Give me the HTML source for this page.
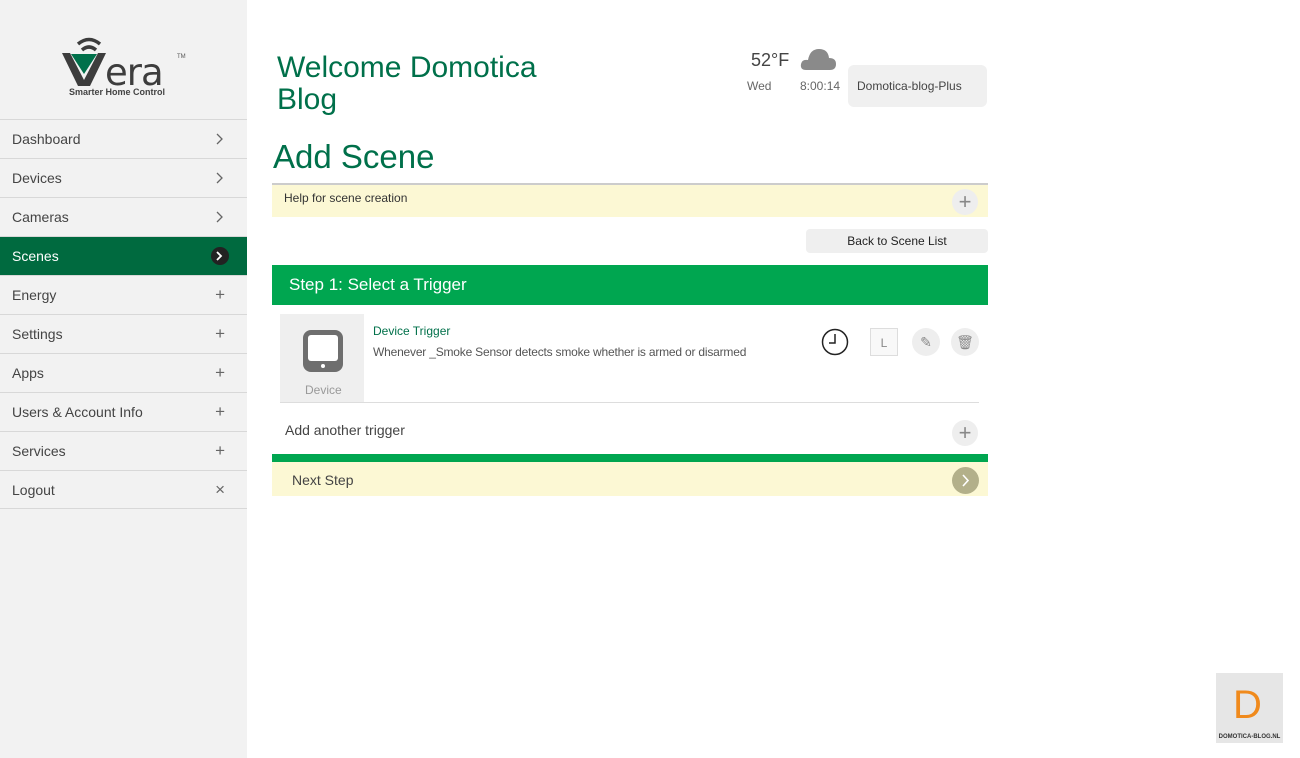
<!DOCTYPE html>
<html><head><meta charset="utf-8"><style>
*{margin:0;padding:0;box-sizing:border-box}
body{width:1300px;height:758px;background:#fff;font-family:"Liberation Sans",sans-serif;position:relative;overflow:hidden;color:#333}
.side{position:absolute;left:0;top:0;width:247px;height:758px;background:#f2f2f2}
.nav{position:absolute;left:0;top:119px;width:247px}
.nav div{height:39px;border-top:1px solid #d8d8d8;font-size:14px;color:#444;padding-left:12px;line-height:38px;position:relative}
.nav div span{position:absolute;right:22px;top:0;color:#666;font-size:17px}
.nav div svg{position:absolute;right:23px;top:13px}
.nav div.act{background:#006a3f;color:#fff}
.nav div.last{border-bottom:1px solid #d8d8d8}
.abs{position:absolute}
</style></head><body>
<div class="side">
<svg class="abs" style="left:60px;top:34px" width="130" height="66">
<path d="M18 10 Q29 1 40 10" stroke="#3d3d3d" stroke-width="3.5" fill="none"/>
<path d="M22 16 Q29 10 36 16" stroke="#3d3d3d" stroke-width="3.5" fill="none"/>
<path d="M2 19 L18 52 L30 52 L46 19 L38 19 L24 46 L10 19Z" fill="#3d3d3d"/>
<path d="M11 20 L24 40 L37 20Z" fill="#00704a"/>
<text x="45" y="51" font-family="DejaVu Sans" font-size="37" fill="#3d3d3d" letter-spacing="-1">era</text>
<text x="117" y="24" font-size="6" fill="#555">TM</text>
<text x="9" y="61" font-size="9" font-weight="bold" fill="#444">Smarter Home Control</text>
</svg>
<div class="nav">
<div>Dashboard<svg width="8" height="12"><path d="M1 1 L6 6 L1 11" stroke="#666" stroke-width="1.3" fill="none"/></svg></div>
<div>Devices<svg width="8" height="12"><path d="M1 1 L6 6 L1 11" stroke="#666" stroke-width="1.3" fill="none"/></svg></div>
<div>Cameras<svg width="8" height="12"><path d="M1 1 L6 6 L1 11" stroke="#666" stroke-width="1.3" fill="none"/></svg></div>
<div class="act">Scenes<span style="right:18px;top:10px;width:18px;height:18px;border-radius:50%;background:#222"></span><svg width="8" height="12" style="right:24px;top:13px"><path d="M2 2 L6 6 L2 10" stroke="#fff" stroke-width="1.8" fill="none"/></svg></div>
<div>Energy<span>+</span></div>
<div>Settings<span>+</span></div>
<div>Apps<span>+</span></div>
<div>Users &amp; Account Info<span>+</span></div>
<div>Services<span>+</span></div>
<div class="last">Logout<span>×</span></div>
</div>
</div>
<div class="abs" style="left:277px;top:52px;font-size:30px;color:#00704a;line-height:32px">Welcome Domotica<br>Blog</div>
<div class="abs" style="left:751px;top:50px;font-size:18px;color:#444">52°F</div>
<svg class="abs" style="left:800px;top:46px" width="38" height="26"><path d="M6 24 Q0 24 1 18 Q2 13 8 14 Q10 3 19 3 Q28 3 29 12 Q36 12 36 18 Q36 24 30 24Z" fill="#8a8a8a"/></svg>
<div class="abs" style="left:747px;top:79px;font-size:12px;color:#666">Wed</div>
<div class="abs" style="left:800px;top:79px;font-size:12px;color:#666">8:00:14</div>
<div class="abs" style="left:848px;top:65px;width:139px;height:42px;background:#f0f0f0;border-radius:6px;font-size:12px;line-height:42px;padding-left:9px;color:#444">Domotica-blog-Plus</div>
<div class="abs" style="left:273px;top:138px;font-size:33px;color:#00704a">Add Scene</div>
<div class="abs" style="left:272px;top:183px;width:716px;height:34px;background:#fcf8d4;border-top:2px solid #ccc;font-size:12px;padding:6px 12px;color:#333">Help for scene creation</div>
<div class="abs" style="left:952px;top:189px;width:26px;height:26px;border-radius:50%;background:#eee;color:#888;font-size:22px;text-align:center;line-height:25px">+</div>
<div class="abs" style="left:806px;top:229px;width:182px;height:24px;background:#efefef;border-radius:4px;font-size:12px;text-align:center;line-height:24px;color:#222">Back to Scene List</div>
<div class="abs" style="left:272px;top:265px;width:716px;height:40px;background:#00a650;color:#fff;font-size:17px;line-height:40px;padding-left:17px">Step 1: Select a Trigger</div>
<div class="abs" style="left:280px;top:314px;width:84px;height:88px;background:#efefef"></div>
<svg class="abs" style="left:302px;top:329px" width="42" height="44"><rect x="1" y="1" width="40" height="42" rx="8" fill="#6e6e6e"/><rect x="6" y="6" width="30" height="26" rx="3" fill="#fff"/><circle cx="21" cy="37" r="2" fill="#fff"/></svg>
<div class="abs" style="left:305px;top:383px;font-size:12px;color:#999">Device</div>
<div class="abs" style="left:280px;top:402px;width:699px;height:1px;background:#ddd"></div>
<div class="abs" style="left:373px;top:324px;font-size:12px;color:#00704a">Device Trigger</div>
<div class="abs" style="left:373px;top:345px;font-size:12px;color:#555;letter-spacing:-0.2px">Whenever _Smoke Sensor detects smoke whether is armed or disarmed</div>
<svg class="abs" style="left:820px;top:328px" width="30" height="30"><circle cx="15" cy="14" r="12.5" stroke="#222" stroke-width="1.5" fill="none"/><path d="M15 6 V15 H9" stroke="#222" stroke-width="1.5" fill="none"/></svg>
<div class="abs" style="left:870px;top:328px;width:28px;height:28px;border:1px solid #ddd;background:#f8f8f8;font-size:12px;color:#888;text-align:center;line-height:28px">L</div>
<div class="abs" style="left:912px;top:328px;width:28px;height:28px;border-radius:50%;background:#eee;color:#888;text-align:center;line-height:28px;font-size:14px">✎</div>
<div class="abs" style="left:951px;top:328px;width:28px;height:28px;border-radius:50%;background:#eee;color:#888;text-align:center;line-height:28px;font-size:14px">🗑</div>
<div class="abs" style="left:285px;top:422px;font-size:14px;color:#444">Add another trigger</div>
<div class="abs" style="left:952px;top:420px;width:26px;height:26px;border-radius:50%;background:#eee;color:#888;font-size:22px;text-align:center;line-height:25px">+</div>
<div class="abs" style="left:272px;top:454px;width:716px;height:8px;background:#00a650"></div>
<div class="abs" style="left:272px;top:462px;width:716px;height:34px;background:#fcf8d4;font-size:14px;line-height:36px;padding-left:20px;color:#444">Next Step</div>
<div class="abs" style="left:952px;top:467px;width:27px;height:27px;border-radius:50%;background:#b3b08a"></div>
<svg class="abs" style="left:961px;top:473px" width="10" height="15"><path d="M2 2 L7 7.5 L2 13" stroke="#fff" stroke-width="1.6" fill="none"/></svg>
<div class="abs" style="left:1216px;top:673px;width:67px;height:70px;background:#e6e6e6"></div>
<div class="abs" style="left:1233px;top:680px;font-size:40px;color:#f08a1c;line-height:50px">D</div>
<div class="abs" style="left:1212px;top:734px;font-size:6px;color:#333;width:75px;text-align:center;font-weight:bold;white-space:nowrap">DOMOTICA-BLOG.NL</div>
</body></html>
